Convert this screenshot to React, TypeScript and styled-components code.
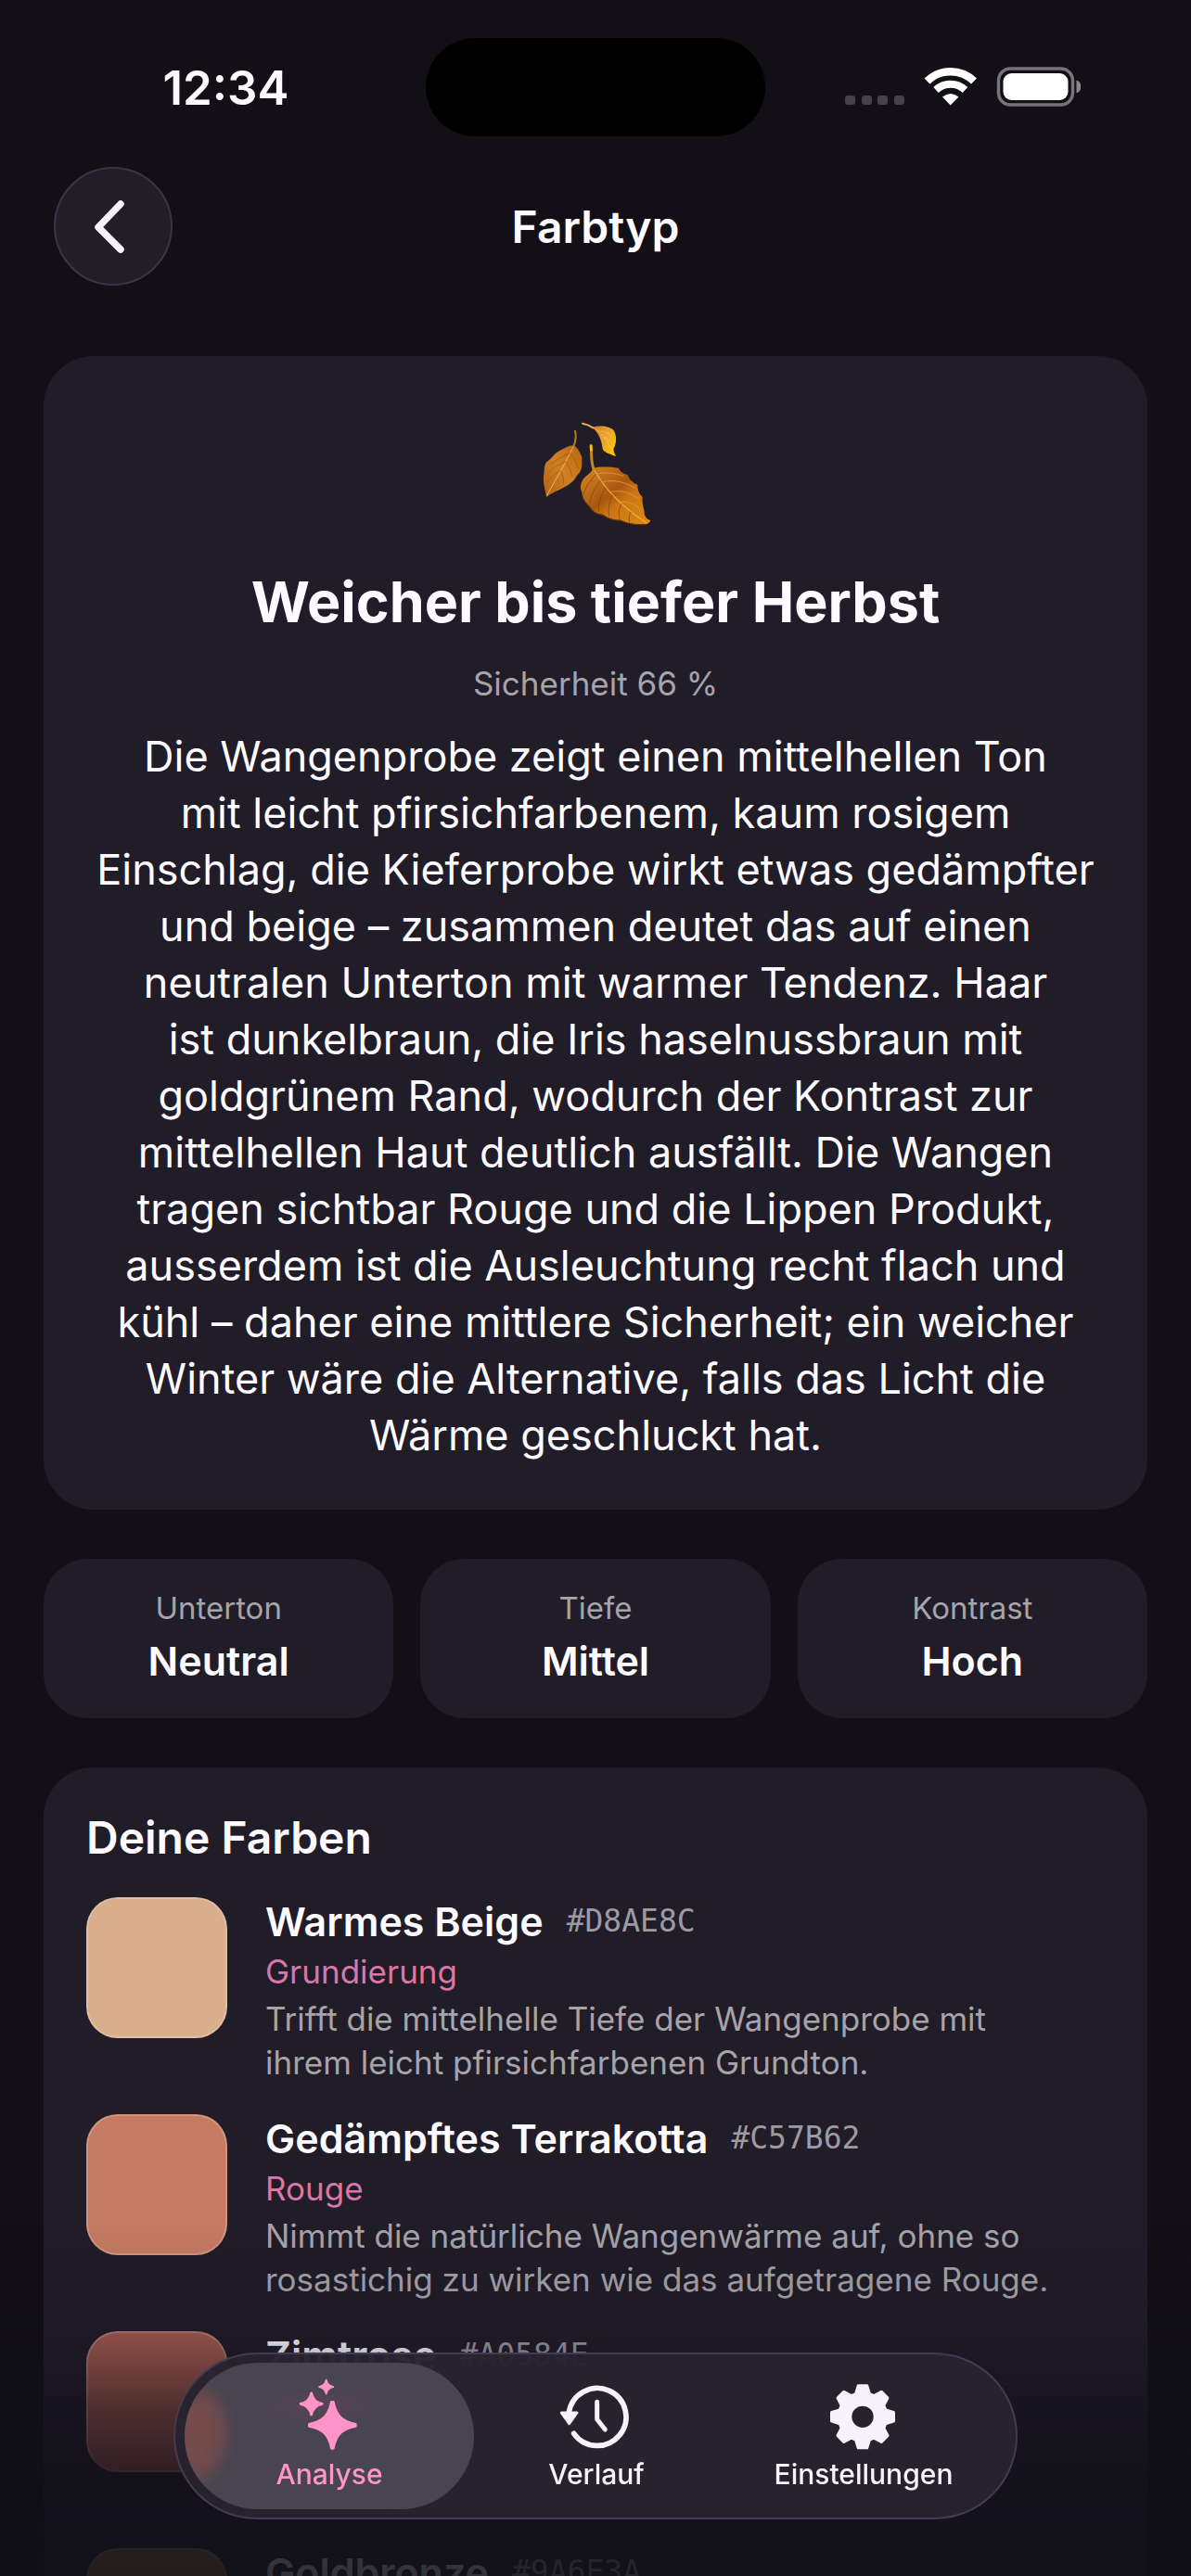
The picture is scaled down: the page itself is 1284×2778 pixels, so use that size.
import React from "react";
import styled, { createGlobalStyle } from "styled-components";

const GlobalStyle = createGlobalStyle`
  *, *::before, *::after { box-sizing: border-box; }
  body {
    margin: 0;
    background: #120f16;
    color: #fdfbff;
    font-family: Inter, "Liberation Sans", sans-serif;
    font-size: 45px;
  }
  h1, h2, h3, p, ul, dl, dt, dd { margin: 0; padding: 0; }
  button { font: inherit; color: inherit; border: 0; background: none; padding: 0; cursor: pointer; }
`;

const Screen = styled.div`
  display: flex;
  flex-direction: column;
  height: 100vh;
  overflow: hidden;
`;

const StatusBar = styled.div`
  display: grid;
  grid-template-columns: 1fr 366px 1fr;
  flex: none;
  padding-top: 41px;
`;

const Clock = styled.time`
  justify-self: center;
  align-self: center;
  padding: 2px 0 0 28px;
  font-size: 51px;
  font-weight: 600;
  line-height: 60px;
`;

const Island = styled.div`
  height: 106px;
  border-radius: 53px;
  background: #000;
`;

const StatusIcons = styled.div`
  justify-self: end;
  align-self: center;
  padding-right: 119px;

  svg { display: block; }
`;

const Header = styled.header`
  display: grid;
  grid-template-columns: 128px 1fr 128px;
  align-items: center;
  flex: none;
  padding: 33px 58px 0;
`;

const BackButton = styled.button`
  display: grid;
  place-items: center;
  height: 128px;
  border-radius: 64px;
  border: 2px solid #3a3446;
  background: #211e27;
`;

const HeaderTitle = styled.h1`
  padding-top: 2px;
  text-align: center;
  font-size: 48px;
  font-weight: 600;
  line-height: 60px;
`;

const Content = styled.main`
  display: flex;
  flex-direction: column;
  flex: 1;
  min-height: 0;
  gap: 53px;
  padding: 76px 47px 0;
  overflow-y: auto;
  scrollbar-width: none;

  > * { flex: none; }
`;

const Card = styled.section`
  border-radius: 54px;
  background: #201c28;
`;

const ResultCard = styled(Card)`
  display: flex;
  flex-direction: column;
  align-items: center;
  gap: 24px;
  padding: 66px 47px 50px;
  text-align: center;
`;

const ResultTitle = styled.h2`
  margin-top: 11px;
  font-size: 61px;
  font-weight: 700;
  line-height: 80px;
`;

const Confidence = styled.p`
  color: #a6a4a9;
  font-size: 35px;
  line-height: 48px;
`;

const Explanation = styled.p`
  line-height: 61px;
`;

const Traits = styled.dl`
  display: grid;
  grid-template-columns: repeat(3, 1fr);
  gap: 29px;
`;

const Trait = styled.div`
  display: flex;
  flex-direction: column;
  gap: 8px;
  padding: 31px 24px 35px;
  border-radius: 48px;
  background: #201c28;
  text-align: center;

  dt { color: #a6a4a9; font-size: 33px; line-height: 44px; }
  dd { font-size: 43px; font-weight: 600; line-height: 54px; }
`;

const PaletteCard = styled(Card)`
  padding: 46px 46px 240px;
`;

const PaletteTitle = styled.h2`
  font-size: 48px;
  font-weight: 600;
  line-height: 60px;
`;

const ColorList = styled.ul`
  display: flex;
  flex-direction: column;
  gap: 32px;
  margin-top: 34px;
  list-style: none;
`;

const ColorItem = styled.li`
  display: grid;
  grid-template-columns: 152px 1fr;
  column-gap: 41px;
`;

const Swatch = styled.div<{ $color: string }>`
  height: 152px;
  border-radius: 34px;
  border: 2px solid rgba(255, 255, 255, 0.2);
  background: ${(p) => p.$color};
`;

const ColorText = styled.div`
  display: flex;
  flex-direction: column;
  gap: 6px;
  padding-right: 40px;
`;

const ColorHead = styled.div`
  display: flex;
  align-items: center;
  gap: 25px;

  h3 { font-size: 43px; font-weight: 600; line-height: 52px; }
  code {
    color: #9d9ba1;
    font-family: "DejaVu Sans Mono", "Liberation Mono", monospace;
    font-size: 33px;
    line-height: 44px;
  }
`;

const Usage = styled.p`
  color: #d977a6;
  font-size: 35px;
  line-height: 44px;
`;

const Reason = styled.p`
  color: #a6a4a9;
  font-size: 35px;
  line-height: 47px;
`;

const Dock = styled.div`
  position: fixed;
  inset: auto 0 0;
  display: flex;
  justify-content: center;
  padding: 137px 48px 61px;
  background: linear-gradient(
    to bottom,
    rgba(17, 15, 24, 0) 0,
    rgba(17, 15, 24, 0.15) 120px,
    rgba(17, 15, 24, 0.58) 200px,
    rgba(17, 15, 24, 0.8) 270px,
    rgba(17, 15, 24, 0.86) 100%
  );
`;

const TabBar = styled.nav`
  display: grid;
  grid-template-columns: repeat(3, 1fr);
  width: 100%;
  max-width: 910px;
  height: 180px;
  padding: 9px 20px 9px 22px;
  border: 2px solid #433b51;
  border-radius: 90px;
  background: rgba(39, 35, 47, 0.97);
`;

const Tab = styled.button<{ $active?: boolean }>`
  display: flex;
  flex-direction: column;
  align-items: center;
  margin: 0 -12px;
  padding-top: 17px;
  border-radius: 79px;
  color: ${(p) => (p.$active ? "#ff94c8" : "#f6f2ff")};
  background: ${(p) =>
    p.$active
      ? `radial-gradient(ellipse 60px 20px at 145px 46px, rgba(150, 60, 100, 0.28), transparent),
         radial-gradient(ellipse 52px 62px at 4px 76px, #764b4c 40%, rgba(118, 75, 76, 0.7) 70%, rgba(118, 75, 76, 0) 100%),
         #484450`
      : "none"};
  font-size: 30px;
  font-weight: 500;
  line-height: 36px;

  svg { display: block; margin-bottom: 5px; }
`;

function StatusGlyphs() {
  return (
    <svg width="256" height="44" viewBox="909 72 256 44" aria-hidden="true">
      {[911, 929, 946, 964].map((x) => (
        <rect key={x} x={x} y="103" width="11" height="10" rx="3" fill="#454249" />
      ))}
      <g fill="none" stroke="#fff">
        <path d="M999.500 87.500 A36 36 0 0 1 1050 87.500" strokeWidth="8.500" />
        <path d="M1009 97 A23 23 0 0 1 1040.500 97" strokeWidth="8" />
      </g>
      <path d="M1016 104.500 Q1024.700 97.500 1033.500 104.500 L1024.700 113.500 Z" fill="#fff" />
      <rect x="1076.500" y="74" width="80" height="39" rx="13" fill="none" stroke="#767379" strokeWidth="3.500" />
      <rect x="1081.500" y="79" width="70" height="29" rx="9" fill="#fff" />
      <path d="M1160.500 86.500 C1167 88.500 1167 98.500 1160.500 100.500 Z" fill="#8b898e" />
    </svg>
  );
}

function BackIcon() {
  return (
    <svg width="60" height="60" viewBox="0 0 60 60" fill="none" aria-hidden="true">
      <path d="M38 6 L14 31 L38 55" stroke="#f6f2ff" strokeWidth="7.500" strokeLinecap="round" strokeLinejoin="round" />
    </svg>
  );
}

function AutumnLeaves() {
  return (
    <svg width="124" height="124" viewBox="60 60 372 372" role="img" aria-label="Herbstblätter">
      <defs>
        <linearGradient id="leafBig" x1="0" y1="0" x2="1" y2="1">
          <stop offset="0" stopColor="#d88a24" />
          <stop offset="0.45" stopColor="#a9560f" />
          <stop offset="0.6" stopColor="#c97612" />
          <stop offset="1" stopColor="#e08a16" />
        </linearGradient>
        <linearGradient id="leafLeft" x1="1" y1="0" x2="0" y2="1">
          <stop offset="0" stopColor="#b9660f" />
          <stop offset="0.5" stopColor="#cf8024" />
          <stop offset="1" stopColor="#b45f14" />
        </linearGradient>
        <linearGradient id="leafTop" x1="0" y1="0" x2="1" y2="0.7">
          <stop offset="0" stopColor="#cf7a1c" />
          <stop offset="0.5" stopColor="#eda030" />
          <stop offset="1" stopColor="#f5c400" />
        </linearGradient>
      </defs>
      <path d="M236 92 C262 84 298 90 306 104 C315 120 314 146 305 160 C303 170 308 178 312 186 C298 182 280 176 270 166 C266 140 262 118 236 92 Z" fill="url(#leafTop)" />
      <path d="M236 92 C264 106 286 136 308 184 M262 104 C276 106 288 112 298 122 M276 124 C288 130 296 140 302 152" fill="none" stroke="#f8cb62" strokeWidth="2" />
      <path d="M204 80 C216 82 226 86 238 94" fill="none" stroke="#e6ae56" strokeWidth="6" strokeLinecap="round" />
      <path d="M176 151 C190 160 196 174 202 190 C202 212 204 226 194 240 C182 250 182 262 166 272 C140 294 110 298 88 318 C84 298 76 278 78 250 C82 234 78 220 86 206 C104 196 108 182 124 172 C142 162 156 152 176 151 Z" fill="url(#leafLeft)" />
      <path d="M176 152 C158 190 126 246 88 314" fill="none" stroke="#efb258" strokeWidth="3" />
      <path d="M164 176 C144 184 118 196 100 214 M150 204 C124 214 102 226 92 244 M134 232 C114 242 98 256 90 270 M166 178 C176 194 184 206 190 224 M152 206 C162 224 168 234 170 252 M134 236 C142 250 144 262 142 278" fill="none" stroke="#96510f" strokeWidth="2" opacity="0.8" />
      <path d="M180 104 C184 120 182 136 176 153" fill="none" stroke="#b97a2e" strokeWidth="6" strokeLinecap="round" />
      <path d="M238 224 C264 218 294 220 320 224 C326 234 334 244 350 246 C356 262 366 272 382 278 C382 296 388 308 398 318 C396 334 400 350 404 362 C402 376 408 388 424 394 C420 406 408 408 392 406 C366 406 346 402 326 392 C302 394 286 384 270 374 C248 374 234 364 226 346 C210 334 202 320 202 302 C194 288 198 270 210 256 C222 244 234 238 238 224 Z" fill="url(#leafBig)" />
      <path d="M238 224 C266 276 316 340 412 402" fill="none" stroke="#f0ae4a" strokeWidth="3.5" />
      <path d="M250 244 C278 236 306 240 336 250 M268 270 C300 260 338 268 374 288 M294 302 C324 294 358 302 388 326 M326 334 C350 330 376 342 396 362" fill="none" stroke="#e29a3a" strokeWidth="2.5" />
      <path d="M248 244 C232 262 216 280 208 308 M262 266 C244 288 230 312 228 340 M278 288 C264 312 254 338 256 366 M302 312 C290 334 286 354 290 378 M330 340 C322 356 320 370 324 388 M360 366 C354 378 354 390 356 400" fill="none" stroke="#8a430a" strokeWidth="3" opacity="0.8" />
      <path d="M203 306 C204 330 222 344 230 354 C242 372 262 374 272 378 C296 392 308 392 328 394 C352 406 384 408 408 407" fill="none" stroke="#6d370c" strokeWidth="3" />
      <path d="M232 154 C234 178 230 202 240 228" fill="none" stroke="#c58429" strokeWidth="9" strokeLinecap="round" />
      <path d="M231 152 L232 166" stroke="#f3c21a" strokeWidth="8" strokeLinecap="round" />
    </svg>
  );
}

function starPath(cx: number, cy: number, r: number) {
  const t = r * 0.04;
  const a = r * 0.15;
  const b = r * 0.42;
  return [
    `M${cx + t} ${cy - r}`,
    `C${cx + a} ${cy - b} ${cx + b} ${cy - a} ${cx + r} ${cy - t}`,
    `L${cx + r} ${cy + t}`,
    `C${cx + b} ${cy + a} ${cx + a} ${cy + b} ${cx + t} ${cy + r}`,
    `L${cx - t} ${cy + r}`,
    `C${cx - a} ${cy + b} ${cx - b} ${cy + a} ${cx - r} ${cy + t}`,
    `L${cx - r} ${cy - t}`,
    `C${cx - b} ${cy - a} ${cx - a} ${cy - b} ${cx - t} ${cy - r}Z`,
  ].join(" ");
}

function SparklesIcon() {
  return (
    <svg width="80" height="80" viewBox="402 105 240 240" fill="currentColor" stroke="currentColor" strokeLinejoin="round" aria-hidden="true">
      <path d={starPath(532, 256, 75)} strokeWidth="8" />
      <path d={starPath(464, 187, 36)} strokeWidth="5" />
      <path d={starPath(512, 132, 23)} strokeWidth="4" />
    </svg>
  );
}

function HistoryIcon() {
  return (
    <svg width="80" height="80" viewBox="186 105 240 240" fill="none" stroke="currentColor" strokeLinecap="round" strokeLinejoin="round" aria-hidden="true">
      <path d="M233 283 A93 93 0 1 0 217 215" strokeWidth="17" />
      <path d="M193 216 L243 216 L218 251 Z" fill="currentColor" strokeWidth="9" />
      <path d="M308 181 V237 L334 270" strokeWidth="15" />
    </svg>
  );
}

function gearPath(cx: number, cy: number) {
  const corners: [number, number][] = [[74, -22], [100, -14], [100, 14], [74, 22]];
  const points: string[] = [];
  for (let i = 0; i < 8; i++) {
    const angle = (i * Math.PI) / 4;
    corners.forEach(([r, w]) => {
      const x = cx + r * Math.cos(angle) - w * Math.sin(angle);
      const y = cy + r * Math.sin(angle) + w * Math.cos(angle);
      points.push(`${x.toFixed(1)} ${y.toFixed(1)}`);
    });
  }
  const hole = `M${cx - 40} ${cy} a40 40 0 1 0 80 0 a40 40 0 1 0 -80 0Z`;
  return `M${points.join("L")}Z ${hole}`;
}

function GearIcon() {
  return (
    <svg width="80" height="80" viewBox="90 105 240 240" fill="currentColor" stroke="currentColor" strokeLinejoin="round" aria-hidden="true">
      <path d={gearPath(207, 229)} fillRule="evenodd" strokeWidth="10" />
    </svg>
  );
}

const traits = [
  { label: "Unterton", value: "Neutral" },
  { label: "Tiefe", value: "Mittel" },
  { label: "Kontrast", value: "Hoch" },
];

const colors = [
  {
    name: "Warmes Beige",
    hex: "#D8AE8C",
    usage: "Grundierung",
    reason: "Trifft die mittelhelle Tiefe der Wangenprobe mit ihrem leicht pfirsichfarbenen Grundton.",
  },
  {
    name: "Gedämpftes Terrakotta",
    hex: "#C57B62",
    usage: "Rouge",
    reason: "Nimmt die natürliche Wangenwärme auf, ohne so rosastichig zu wirken wie das aufgetragene Rouge.",
  },
  {
    name: "Zimtrose",
    hex: "#A0584E",
    usage: "Lippen",
    reason: "Holt die müde-rosigen Lippen in eine wärmere Richtung.",
  },
  {
    name: "Goldbronze",
    hex: "#9A6E3A",
    usage: "",
    reason: "",
  },
];

export default function App() {
  return (
    <Screen>
      <GlobalStyle />
      <StatusBar>
        <Clock>12:34</Clock>
        <Island />
        <StatusIcons>
          <StatusGlyphs />
        </StatusIcons>
      </StatusBar>
      <Header>
        <BackButton type="button" aria-label="Zurück">
          <BackIcon />
        </BackButton>
        <HeaderTitle>Farbtyp</HeaderTitle>
      </Header>
      <Content>
        <ResultCard>
          <AutumnLeaves />
          <ResultTitle>Weicher bis tiefer Herbst</ResultTitle>
          <Confidence>Sicherheit 66 %</Confidence>
          <Explanation>
            Die Wangenprobe zeigt einen mittelhellen Ton
            <br />
            mit leicht pfirsichfarbenem, kaum rosigem Einschlag, die Kieferprobe wirkt etwas
            gedämpfter und beige – zusammen deutet das auf einen neutralen Unterton mit warmer
            Tendenz. Haar
            <br />
            ist dunkelbraun, die Iris haselnussbraun mit goldgrünem Rand, wodurch der Kontrast zur
            mittelhellen Haut deutlich ausfällt. Die Wangen tragen sichtbar Rouge und die Lippen
            Produkt, ausserdem ist die Ausleuchtung recht flach und kühl – daher eine mittlere
            Sicherheit; ein weicher Winter wäre die Alternative, falls das Licht die Wärme
            geschluckt hat.
          </Explanation>
        </ResultCard>
        <Traits>
          {traits.map((t) => (
            <Trait key={t.label}>
              <dt>{t.label}</dt>
              <dd>{t.value}</dd>
            </Trait>
          ))}
        </Traits>
        <PaletteCard>
          <PaletteTitle>Deine Farben</PaletteTitle>
          <ColorList>
            {colors.map((c) => (
              <ColorItem key={c.hex}>
                <Swatch $color={c.hex} />
                <ColorText>
                  <ColorHead>
                    <h3>{c.name}</h3>
                    <code>{c.hex}</code>
                  </ColorHead>
                  {c.usage && <Usage>{c.usage}</Usage>}
                  {c.reason && <Reason>{c.reason}</Reason>}
                </ColorText>
              </ColorItem>
            ))}
          </ColorList>
        </PaletteCard>
      </Content>
      <Dock>
        <TabBar aria-label="Hauptnavigation">
          <Tab type="button" $active aria-current="page">
            <SparklesIcon />
            Analyse
          </Tab>
          <Tab type="button">
            <HistoryIcon />
            Verlauf
          </Tab>
          <Tab type="button">
            <GearIcon />
            Einstellungen
          </Tab>
        </TabBar>
      </Dock>
    </Screen>
  );
}
